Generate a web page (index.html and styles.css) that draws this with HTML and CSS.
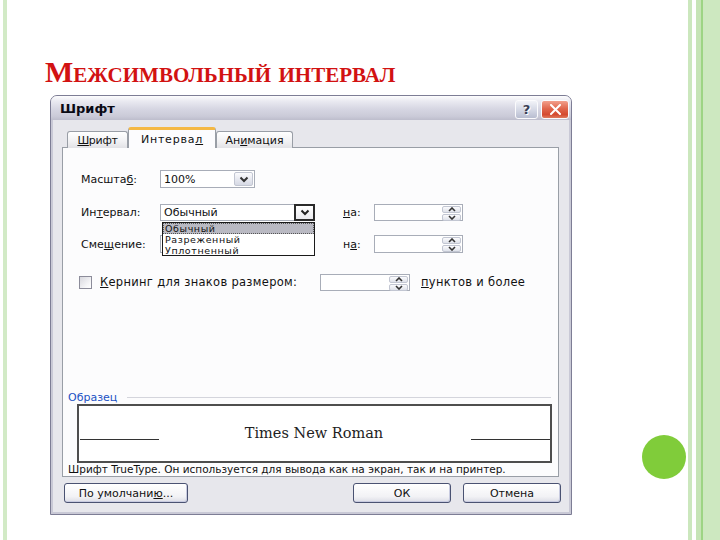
FILE: index.html
```html
<!DOCTYPE html>
<html lang="ru">
<head>
<meta charset="utf-8">
<title>Межсимвольный интервал</title>
<link rel="stylesheet" href="styles.css">
</head>
<body>
<div class="slide">
  <div class="stripe-left"></div>
  <main class="content">
    <h1 class="title">Межсимвольный интервал</h1>
    <div class="stage">
      <section class="dialog">
        <header class="titlebar">
          <span class="caption">Шрифт</span>
          <div class="caption-btns">
            <span class="cbtn help">?</span>
            <span class="cbtn close"><svg width="13" height="11" viewBox="0 0 13 11"><path d="M2 1 L11 10 M11 1 L2 10" stroke="#fff" stroke-width="2" stroke-linecap="round"/></svg></span>
          </div>
        </header>
        <div class="client">
          <div class="tabs">
            <span class="tab t1"><u>Ш</u>рифт</span>
            <span class="tab t2 active">Интерва<u>л</u></span>
            <span class="tab t3">Ан<u>и</u>мация</span>
          </div>
          <div class="panel">
            <div class="row r1">
              <span class="lbl">Масшта<u>б</u>:</span>
              <div class="select s-short">
                <span class="val">100%</span>
                <span class="arrow"><svg width="10" height="7" viewBox="0 0 10 7"><path d="M1.5 1.5 L5 5 L8.5 1.5" fill="none" stroke="#333" stroke-width="2"/></svg></span>
              </div>
            </div>
            <div class="row r2">
              <span class="lbl">Ин<u>т</u>ервал:</span>
              <div class="select s-long open">
                <span class="val">Обычный</span>
                <span class="arrow pressed"><svg width="10" height="7" viewBox="0 0 10 7"><path d="M1.5 1.5 L5 5 L8.5 1.5" fill="none" stroke="#222" stroke-width="2"/></svg></span>
                <ul class="list">
                  <li class="sel">Обычный</li>
                  <li>Разреженный</li>
                  <li>Уплотненный</li>
                </ul>
              </div>
              <span class="na"><u>н</u>а:</span>
              <div class="spin">
                <span class="spin-btns">
                  <span class="sb"><svg width="8" height="5" viewBox="0 0 8 5"><path d="M1 4 L4 1 L7 4" fill="none" stroke="#333" stroke-width="1.6"/></svg></span>
                  <span class="sb"><svg width="8" height="5" viewBox="0 0 8 5"><path d="M1 1 L4 4 L7 1" fill="none" stroke="#333" stroke-width="1.6"/></svg></span>
                </span>
              </div>
            </div>
            <div class="row r3">
              <span class="lbl">Сме<u>щ</u>ение:</span>
              <div class="select s-long"></div>
              <span class="na">н<u>а</u>:</span>
              <div class="spin spin-tall">
                <span class="spin-btns">
                  <span class="sb"><svg width="8" height="5" viewBox="0 0 8 5"><path d="M1 4 L4 1 L7 4" fill="none" stroke="#333" stroke-width="1.6"/></svg></span>
                  <span class="sb"><svg width="8" height="5" viewBox="0 0 8 5"><path d="M1 1 L4 4 L7 1" fill="none" stroke="#333" stroke-width="1.6"/></svg></span>
                </span>
              </div>
            </div>
            <div class="row r4">
              <span class="check"></span>
              <span class="klbl"><u>К</u>ернинг для знаков размером:</span>
              <div class="spin spin-k">
                <span class="spin-btns">
                  <span class="sb"><svg width="8" height="5" viewBox="0 0 8 5"><path d="M1 4 L4 1 L7 4" fill="none" stroke="#333" stroke-width="1.6"/></svg></span>
                  <span class="sb"><svg width="8" height="5" viewBox="0 0 8 5"><path d="M1 1 L4 4 L7 1" fill="none" stroke="#333" stroke-width="1.6"/></svg></span>
                </span>
              </div>
              <span class="pts"><u>п</u>унктов и более</span>
            </div>
            <div class="sample">
              <div class="legend"><span class="legend-text">Образец</span><span class="legend-line"></span></div>
              <div class="preview">
                <span class="pline"></span>
                <span class="ptext">Times New Roman</span>
                <span class="pline"></span>
              </div>
            </div>
            <p class="note">Шрифт TrueType. Он используется для вывода как на экран, так и на принтер.</p>
          </div>
          <div class="buttons">
            <span class="btn b-def">По умолчани<u>ю</u>...</span>
            <span class="btn b-ok">ОК</span>
            <span class="btn b-cancel">Отмена</span>
          </div>
        </div>
      </section>
      <div class="dot"></div>
    </div>
  </main>
  <div class="stripes-right">
    <span class="rs rs1"></span>
    <span class="rs rs2"></span>
    <span class="rs rs3"></span>
    <span class="rs rs4"></span>
    <span class="rs rs5"></span>
  </div>
</div>
</body>
</html>
```

FILE: styles.css
```css
html, body {
  margin: 0;
  padding: 0;
  background: #ffffff;
}

.slide {
  display: flex;
  width: 720px;
  height: 540px;
  overflow: hidden;
  background: #ffffff;
}

.stripe-left {
  flex: none;
  width: 4px;
  margin-left: 3px;
  background: #d2eac6;
}

.content {
  flex: 1;
  min-width: 0;
}

.title {
  margin: 57px 0 0 38px;
  font: bold 30px/30px "Liberation Serif", serif;
  font-variant: small-caps;
  color: #d21212;
  letter-spacing: 0;
}

.stage {
  display: flex;
  margin-top: 8px;
  padding-left: 43px;
}

.dot {
  flex: none;
  width: 44px;
  height: 44px;
  border-radius: 50%;
  background: #80cc3a;
  margin: 340px 0 0 70px;
}

/* stripes on the right */
.stripes-right {
  flex: none;
  display: flex;
  width: 32px;
}
.rs { display: block; }
.rs1 { width: 4px; background: #cbe7bd; }
.rs2 { width: 4px; background: #ffffff; }
.rs3 { width: 5px; background: #c6e4b6; }
.rs4 { width: 2px; background: #9dd484; }
.rs5 { flex: 1; background: #cde8c0; }

/* dialog */
.dialog {
  flex: none;
  width: 522px;
  height: 420px;
  box-sizing: border-box;
  border: 1px solid #7d7d95;
  border-radius: 7px 7px 0 0;
  background: #e7e7ec;
  display: flex;
  flex-direction: column;
  font: 11px/13px "DejaVu Sans", sans-serif;
  color: #111;
  box-shadow: inset 2px 0 0 #c9c9d6, inset -2px 0 0 #c9c9d6, inset 0 -2px 0 #c9c9d6;
}

.titlebar {
  height: 24px;
  flex: none;
  display: flex;
  align-items: center;
  justify-content: space-between;
  border-radius: 6px 6px 0 0;
  background: linear-gradient(#fdfdfe 0%, #ebebf2 20%, #d6d6e2 55%, #cacad8 85%, #bdbdcc 100%);
}

.caption {
  padding-left: 9px;
  padding-top: 2px;
  font: bold 13px/16px "DejaVu Sans", sans-serif;
  color: #0a0a14;
}

.caption-btns {
  display: flex;
  gap: 3px;
  margin-right: 2px;
  padding-top: 2px;
}

.cbtn {
  display: flex;
  align-items: center;
  justify-content: center;
  height: 19px;
  box-sizing: border-box;
  border: 1px solid #fbfbfd;
  border-radius: 3px;
}

.help {
  width: 23px;
  background: linear-gradient(#f2f3f8, #d0d4e2 60%, #b8bdd0);
  font: bold 13px/1 "DejaVu Sans", sans-serif;
  color: #3a3f55;
  text-shadow: 1px 1px 0 #fff;
}

.close {
  width: 28px;
  background: linear-gradient(#f2a08c, #e0664c 45%, #d44a30 80%, #e07a5e);
}

.client {
  flex: 1;
  display: flex;
  flex-direction: column;
  padding: 8px 12px 11px 11px;
}

/* tabs */
.tabs {
  display: flex;
  align-items: flex-end;
  height: 20px;
  padding-left: 5px;
  margin-bottom: -1px;
  position: relative;
  z-index: 2;
}

.tab {
  display: flex;
  align-items: center;
  justify-content: center;
  height: 17px;
  box-sizing: border-box;
  border: 1px solid #999ea6;
  border-bottom: none;
  border-radius: 3px 3px 0 0;
  background: linear-gradient(#ffffff, #f1f1f3 60%, #e2e2e6);
  padding-top: 1px;
}
.t1 { width: 61px; letter-spacing: -0.3px; }
.t2 { width: 88px; }
.t3 { width: 77px; }

.tab.active {
  height: 21px;
  border-top: 3px solid #f4b844;
  background: #fcfcfe;
  padding-top: 0;
  letter-spacing: 0.8px;
}

/* panel */
.panel {
  height: 330px;
  box-sizing: border-box;
  border: 1px solid #999ea6;
  background: #fcfcfd;
  display: flex;
  flex-direction: column;
  position: relative;
  z-index: 1;
}

.row {
  display: flex;
  align-items: center;
  height: 18px;
  padding-left: 18px;
}
.r1 { margin-top: 22px; }
.r2 { margin-top: 15px; position: relative; z-index: 3; }
.r3 { margin-top: 14px; }
.r4 {
  margin-top: 20px;
  padding-left: 16px;
  font-size: 11.5px;
  letter-spacing: 0.3px;
}

.lbl { width: 79px; flex: none; }

.select {
  position: relative;
  display: flex;
  align-items: center;
  justify-content: space-between;
  height: 18px;
  box-sizing: border-box;
  border: 1px solid #a8adb8;
  background: #ffffff;
  padding-left: 3px;
}
.s-short { width: 95px; }
.s-long { width: 155px; flex: none; }
.r2 .select { height: 17px; }

.arrow {
  display: flex;
  align-items: center;
  justify-content: center;
  width: 19px;
  height: 14px;
  margin-right: 1px;
  box-sizing: border-box;
  border: 1px solid #c2c6d2;
  border-radius: 2px;
  background: linear-gradient(#fbfbfd, #e4e6ee 60%, #d6d9e4);
}
.arrow.pressed {
  height: 17px;
  width: 21px;
  margin-right: -1px;
  border: 2px solid #2a2a2a;
  border-radius: 0;
  background: linear-gradient(#ffffff, #eaeaee);
}

.list {
  position: absolute;
  top: 17px;
  left: 1px;
  width: 153px;
  height: 34px;
  box-sizing: border-box;
  margin: 0;
  padding: 0;
  list-style: none;
  border: 1px solid #1a1a1a;
  background: #ffffff;
  z-index: 5;
  font-size: 9.5px;
  letter-spacing: 0.6px;
}
.list li {
  height: 11px;
  line-height: 11px;
  padding-left: 2px;
  overflow: hidden;
}
.list li.sel {
  background: #b9b9c2;
  outline: 1px dotted #555;
  outline-offset: -1px;
}

.na {
  flex: none;
  width: 31px;
  margin-left: 28px;
}

.spin {
  display: flex;
  justify-content: flex-end;
  align-items: center;
  width: 89px;
  height: 17px;
  box-sizing: border-box;
  border: 1px solid #a8adb8;
  background: #ffffff;
  padding-right: 1px;
}
.spin-tall { height: 18px; }
.spin-k { width: 90px; }

.spin-btns {
  display: flex;
  flex-direction: column;
  gap: 1px;
  width: 19px;
  height: calc(100% - 2px);
}
.sb {
  flex: 1;
  display: flex;
  align-items: center;
  justify-content: center;
  border: 1px solid #c2c6d2;
  border-radius: 2px;
  background: linear-gradient(#fbfbfd, #dfe2ea);
}

.check {
  flex: none;
  width: 13px;
  height: 13px;
  box-sizing: border-box;
  border: 1px solid #8c8c9a;
  background: linear-gradient(135deg, #d8d8de, #f6f6f8 70%, #ffffff);
}
.klbl {
  flex: none;
  width: 220px;
  margin-left: 8px;
}
.pts { margin-left: 11px; }

/* sample */
.sample {
  margin-top: auto;
}
.legend {
  display: flex;
  align-items: center;
  height: 12px;
  padding-left: 5px;
}
.legend-text { color: #2152c4; }
.legend-line {
  flex: 1;
  margin: 1px 7px 0 10px;
  border-top: 1px solid #d4d5dc;
}

.preview {
  display: flex;
  align-items: center;
  justify-content: space-between;
  height: 59px;
  box-sizing: border-box;
  margin: 1px 6px 0 14px;
  border: 2px solid #4e4e4e;
  background: #ffffff;
  padding-left: 1px;
}
.pline {
  width: 79px;
  height: 1px;
  margin-top: 12px;
  background: #333;
}
.ptext {
  font: 14.5px/1 "DejaVu Serif", serif;
  color: #222;
  padding-right: 2px;
}

.note {
  margin: 0;
  height: 13px;
  line-height: 13px;
  padding-left: 5px;
  font-size: 10.5px;
  color: #111;
}

/* buttons */
.buttons {
  display: flex;
  align-items: center;
  gap: 12px;
  height: 20px;
  margin: 6px -2px 0 2px;
}
.btn {
  display: flex;
  align-items: center;
  justify-content: center;
  height: 20px;
  box-sizing: border-box;
  border: 1px solid #4a5272;
  border-radius: 3px;
  background: linear-gradient(#ffffff, #f2f2f5 70%, #dcdde6);
  box-shadow: inset -1px -1px 0 #c8cbe0;
}
.b-def { width: 124px; margin-right: auto; }
.b-ok { width: 98px; }
.b-cancel { width: 98px; }

u { text-decoration: underline; text-underline-offset: 1px; }
```
